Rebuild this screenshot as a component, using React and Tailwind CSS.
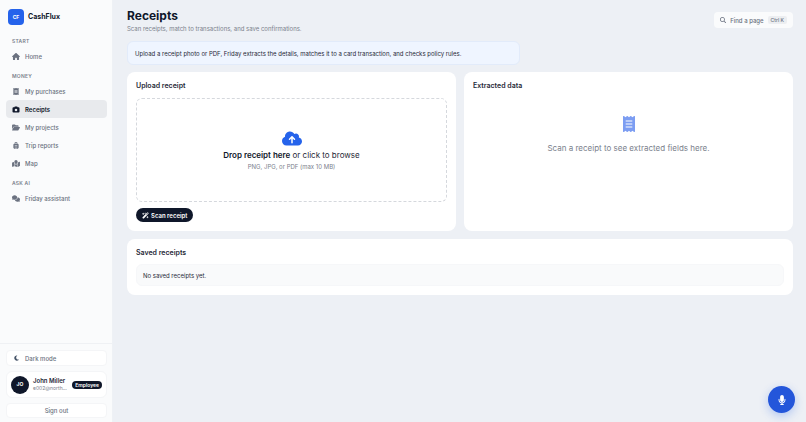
import React from 'react';
import {
  FaCamera,
  FaCloudArrowUp,
  FaComments,
  FaFolderOpen,
  FaHouse,
  FaMagnifyingGlass,
  FaMapLocation,
  FaMicrophone,
  FaMoon,
  FaReceipt,
  FaSuitcaseRolling,
  FaWandMagicSparkles,
} from 'react-icons/fa6';

const sections = [
  { title: 'Start', items: [{ label: 'Home', icon: FaHouse }] },
  {
    title: 'Money',
    items: [
      { label: 'My purchases', icon: FaReceipt },
      { label: 'Receipts', icon: FaCamera, active: true },
      { label: 'My projects', icon: FaFolderOpen },
      { label: 'Trip reports', icon: FaSuitcaseRolling },
      { label: 'Map', icon: FaMapLocation },
    ],
  },
  { title: 'Ask AI', items: [{ label: 'Friday assistant', icon: FaComments }] },
];

const NavItem = ({ label, icon: Icon, active }) => (
  <li>
    <a
      href="#"
      aria-current={active ? 'page' : undefined}
      className={
        active
          ? 'flex h-[18px] items-center gap-[5px] rounded-[4px] bg-[#e8eaed] px-[6px] font-semibold text-[#0f172a]'
          : 'flex h-[18px] items-center gap-[5px] rounded-[4px] px-[6px] font-medium text-[#6b7280]'
      }
    >
      <Icon className="h-[7px] w-2" />
      {label}
    </a>
  </li>
);

const Sidebar = () => (
  <aside className="flex w-[113px] shrink-0 flex-col border-r border-[#eef1f5] bg-[#fafbfc]">
    <a href="#" className="flex items-center gap-1 px-2 pt-[9px] text-[7px] leading-4 font-bold text-[#0f172a]">
      <span className="flex size-4 items-center justify-center rounded-[4px] bg-[#2563eb] text-[5px] text-white">CF</span>
      CashFlux
    </a>
    <nav className="pt-3 pr-[5px] pl-[6px] text-[6px]">
      {sections.map((section) => (
        <div key={section.title} className="mb-[7px]">
          <h2 className="px-[6px] pb-[2px] text-[5px] leading-[8px] font-semibold tracking-wider text-[#7b818c] uppercase">
            {section.title}
          </h2>
          <ul>
            {section.items.map((item) => (
              <NavItem key={item.label} {...item} />
            ))}
          </ul>
        </div>
      ))}
    </nav>
    <div className="mt-auto flex flex-col gap-[5px] border-t border-[#eff1f4] pt-[6px] pr-[5px] pb-1 pl-[6px]">
      <button className="flex h-4 items-center gap-[5px] rounded-[4px] border border-[#f4f5f7] bg-white px-[6px] text-[6px] font-medium text-[#6b7280]">
        <FaMoon className="h-[6px] w-[7px] text-[#475569]" />
        Dark mode
      </button>
      <div className="flex h-[27px] items-center gap-1 rounded-md border border-[#f4f5f7] bg-white px-1">
        <span className="flex size-[18px] shrink-0 items-center justify-center rounded-full bg-[#0f172a] text-[5px] font-bold text-white">
          JO
        </span>
        <div className="min-w-0 flex-1">
          <p className="text-[6px] leading-[8px] font-semibold whitespace-nowrap text-[#1f2937]">John Miller</p>
          <p className="text-[5px] leading-[7px] whitespace-nowrap text-[#7b818c]">e002@north…</p>
        </div>
        <span className="rounded-full bg-[#0f172a] px-[3px] text-[5px] leading-[8px] font-semibold text-white">Employee</span>
      </div>
      <button className="h-[15px] rounded-[4px] border border-[#f4f5f7] bg-white text-[6px] font-medium text-[#6b7280]">
        Sign out
      </button>
    </div>
  </aside>
);

const Card = ({ title, className = '', children }) => (
  <section className={`rounded-lg bg-white px-[9px] ${className}`}>
    <h2 className="text-[7px] leading-[10px] font-semibold text-[#1f2937]">{title}</h2>
    {children}
  </section>
);

const App = () => {
  return (
    <div className="flex min-h-screen bg-[#edf0f5] font-['Inter',sans-serif] text-[#1f2937]">
      <Sidebar />
      <main className="min-w-0 flex-1 px-[13px] pt-2 pl-[14px]">
        <header className="flex items-start justify-between">
          <div>
            <h1 className="text-[12px] leading-[15px] font-bold text-[#0f172a]">Receipts</h1>
            <p className="text-[6px] leading-[11px] text-[#7b818c]">
              Scan receipts, match to transactions, and save confirmations.
            </p>
          </div>
          <button className="mt-1 flex h-4 items-center gap-1 rounded-[4px] bg-[#fafbfc] px-[6px] text-[6px] font-medium text-[#6b7280]">
            <FaMagnifyingGlass className="size-[6px]" />
            Find a page
            <kbd className="rounded-xs bg-[#eceef1] px-[3px] font-['Inter',sans-serif] text-[5px] leading-[8px]">Ctrl K</kbd>
          </button>
        </header>

        <p className="mt-[7px] w-[393px] max-w-full rounded-md border border-[#e2ebfa] bg-[#eff5ff] px-[7px] pt-[6px] pb-1 text-[6px] leading-3 text-[#1f2937]">
          Upload a receipt photo or PDF, Friday extracts the details, matches it to a card transaction, and checks policy rules.
        </p>

        <div className="mt-[7px] grid grid-cols-2 gap-2">
          <Card title="Upload receipt" className="pt-[9px] pb-[9px]">
            <label className="mt-[7px] flex h-[104px] cursor-pointer flex-col items-center justify-center rounded-md border border-dashed border-[#d5d8dd] text-[#1f2937]">
              <input type="file" accept=".png,.jpg,.pdf" className="sr-only" />
              <FaCloudArrowUp className="h-[17px] w-5 text-[#2563eb]" />
              <span className="mt-[2px] text-[8px] leading-3">
                <strong className="font-semibold text-[#0f172a]">Drop receipt here</strong> or click to browse
              </span>
              <span className="mt-[2px] text-[6px] leading-[8px] text-[#7b818c]">PNG, JPG, or PDF (max 10 MB)</span>
            </label>
            <button className="mt-[6px] flex h-[14px] items-center gap-[2px] rounded-full bg-[#0f172a] px-[6px] text-[6px] font-semibold text-white">
              <FaWandMagicSparkles className="size-[7px]" />
              Scan receipt
            </button>
          </Card>
          <Card title="Extracted data" className="pt-[9px]">
            <div className="flex flex-col items-center pt-[25px]">
              <FaReceipt className="h-4 w-3 text-[#7c9df2]" />
              <p className="mt-[10px] text-[8px] leading-[13px] text-[#7b818c]">Scan a receipt to see extracted fields here.</p>
            </div>
          </Card>
        </div>

        <Card title="Saved receipts" className="mt-2 pt-[9px] pb-[9px]">
          <p className="mt-[6px] rounded-md border border-[#f6f7f9] bg-[#f9fafb] px-[6px] pt-[5px] pb-[3px] text-[6px] leading-3">
            No saved receipts yet.
          </p>
        </Card>
      </main>

      <button
        aria-label="Talk to Friday"
        className="fixed right-[11px] bottom-[9px] flex size-[27px] items-center justify-center rounded-full bg-[#2456da] text-white shadow-[0_3px_10px_rgba(37,99,235,0.3)]"
      >
        <FaMicrophone className="size-[10px]" />
      </button>
    </div>
  );
};

export default App;
